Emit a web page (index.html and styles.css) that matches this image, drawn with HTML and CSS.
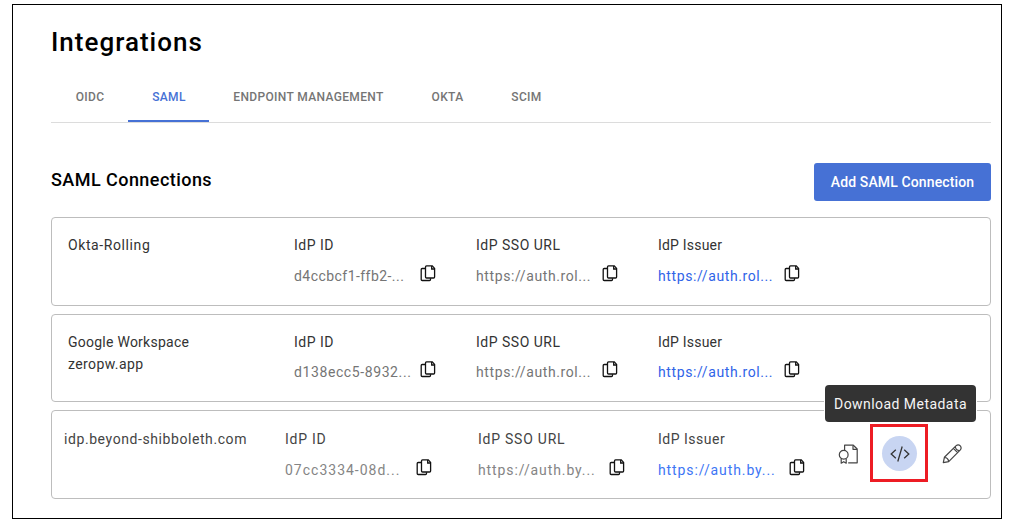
FILE: index.html
```html
<!DOCTYPE html>
<html lang="en">
<head>
<meta charset="utf-8">
<title>Integrations</title>
<link rel="stylesheet" href="styles.css">
</head>
<body>
<svg class="symbols" aria-hidden="true">
  <symbol id="copy" viewBox="0 0 16 17">
    <path class="copy-back" d="M5 3.5H2.2Q1.2 3.5 1.2 4.5V14.5Q1.2 15.5 2.2 15.5H9.5Q10.5 15.5 10.5 14.5V13.2"/>
    <path d="M6.5.9H12.3L14.6 3.4V12Q14.6 13 13.6 13H6.5Q5.5 13 5.5 12V1.9Q5.5.9 6.5.9Z"/>
    <path d="M11.7 1V4H14.6"/>
  </symbol>
</svg>
<main class="frame">
  <h1 class="title">Integrations</h1>
  <nav class="tabs">
    <a class="tab tab-oidc"><span>OIDC</span></a>
    <a class="tab tab-saml active"><span>SAML</span></a>
    <a class="tab tab-endpoint"><span>ENDPOINT MANAGEMENT</span></a>
    <a class="tab tab-okta"><span>OKTA</span></a>
    <a class="tab tab-scim"><span>SCIM</span></a>
  </nav>
  <header class="section-head">
    <h2 class="section-title">SAML Connections</h2>
    <button class="add">Add SAML Connection</button>
  </header>
  <section class="cards">
    <article class="card">
      <div class="name"><span class="n-okta">Okta-Rolling</span></div>
      <div class="field"><div class="label l-id">IdP ID</div><div class="value"><span class="v-okta">d4ccbcf1-ffb2-...</span><svg class="copy"><use href="#copy"/></svg></div></div>
      <div class="field"><div class="label l-sso">IdP SSO URL</div><div class="value"><span class="v-url">https://auth.rol...</span><svg class="copy"><use href="#copy"/></svg></div></div>
      <div class="field"><div class="label l-issuer">IdP Issuer</div><div class="value link"><span class="v-url">https://auth.rol...</span><svg class="copy"><use href="#copy"/></svg></div></div>
    </article>
    <article class="card card-google">
      <div class="name"><span class="n-google">Google Workspace</span><br><span class="n-zero">zeropw.app</span></div>
      <div class="field"><div class="label l-id">IdP ID</div><div class="value"><span class="v-google">d138ecc5-8932...</span><svg class="copy"><use href="#copy"/></svg></div></div>
      <div class="field"><div class="label l-sso">IdP SSO URL</div><div class="value"><span class="v-url">https://auth.rol...</span><svg class="copy"><use href="#copy"/></svg></div></div>
      <div class="field"><div class="label l-issuer">IdP Issuer</div><div class="value link"><span class="v-url">https://auth.rol...</span><svg class="copy"><use href="#copy"/></svg></div></div>
    </article>
    <article class="card card-idp">
      <div class="name"><span class="n-idp">idp.beyond-shibboleth.com</span></div>
      <div class="field"><div class="label l-id">IdP ID</div><div class="value"><span class="v-idp">07cc3334-08d...</span><svg class="copy"><use href="#copy"/></svg></div></div>
      <div class="field"><div class="label l-sso">IdP SSO URL</div><div class="value"><span class="v-by">https://auth.by...</span><svg class="copy"><use href="#copy"/></svg></div></div>
      <div class="field"><div class="label l-issuer">IdP Issuer</div><div class="value link"><span class="v-by">https://auth.by...</span><svg class="copy"><use href="#copy"/></svg></div></div>
      <div class="actions">
        <svg class="action" viewBox="0 0 20 20"><path d="M6.6 6.3V1.2H15.3L19.2 5V18.8H10.2"/><path d="M15 1.4V5.3H19"/><circle cx="5.7" cy="10.8" r="4.4"/><path d="M3.2 14.6V19.2L5.7 17.7L8.2 19.2V14.6"/></svg>
        <div class="highlight"><div class="circle"><svg class="code" viewBox="0 0 20 18"><path d="M5.8 4.8L1.2 9L5.8 13.2M14.2 4.8L18.8 9L14.2 13.2M12.2 1.5L7.8 16.5"/></svg></div></div>
        <svg class="action" viewBox="0 0 20 20"><path d="M1.3 18.7L2.4 13.3L13.9 1.9Q16.2-.1 18.3 1.9Q20 4 18.1 6.2L6.7 17.6ZM2.4 13.3Q6.2 13.6 6.7 17.6M11.4 4.4L15.6 8.6M13.3 2.5Q13.6 6.2 17.5 6.7"/></svg>
        <div class="tooltip">Download Metadata</div>
      </div>
    </article>
  </section>
</main>
</body>
</html>
```

FILE: styles.css
```css
* { box-sizing: border-box; }
body {
  margin: 0;
  padding: 4px 8px 0 12px;
  background: #fff;
  font-family: Roboto, "Liberation Sans", sans-serif;
  font-size: 14px;
  color: #333;
  white-space: nowrap;
}
.symbols { display: none; }
.frame {
  height: 515px;
  border: 1px solid #000;
  padding: 19px 10px 0 38px;
}
.title {
  margin: 0;
  height: 36px;
  font-size: 26px;
  line-height: 36px;
  font-weight: 500;
  letter-spacing: 1px;
  color: #000;
}
.tabs {
  display: flex;
  height: 63px;
  border-bottom: 1px solid #dcdcdc;
  font-size: 12px;
  font-weight: 500;
  letter-spacing: .35px;
  color: #757575;
}
.tab {
  height: 62px;
  padding: 25px 0 0 1px;
  line-height: 24px;
  text-align: center;
}
.tab-oidc { width: 77px; }
.tab-saml { width: 81px; }
.tab-endpoint { width: 198px; }
.tab-okta { width: 80px; }
.tab-scim { width: 78px; }
.tab.active { color: #4671d5; border-bottom: 2px solid #4671d5; }
.section-head {
  display: flex;
  justify-content: space-between;
  align-items: center;
  height: 38px;
  margin: 40px 0 16px;
}
.section-title {
  margin: -4px 0 0;
  font-size: 18px;
  line-height: 24px;
  font-weight: 500;
  letter-spacing: .45px;
  color: #000;
}
.add {
  width: 177px;
  height: 38px;
  padding: 0;
  border: 0;
  border-radius: 3px;
  background: #4671d5;
  color: #fff;
  font: 500 14px Roboto, sans-serif;
  letter-spacing: .13px;
}
.cards { display: flex; flex-direction: column; gap: 8px; }
.card {
  display: grid;
  grid-template-columns: 226px 182px 182px 182px;
  height: 89px;
  padding: 16px 0 0 16px;
  border: 1px solid #bdbdbd;
  border-radius: 4px;
}
.card-google { height: 88px; }
.card-idp {
  grid-template-columns: 221px 193px 180px 180px 1fr;
  padding: 17px 0 0 12px;
  color: #444;
}
.name, .label { line-height: 22px; letter-spacing: .5px; }
.n-okta { letter-spacing: .6px; }
.n-google { letter-spacing: .25px; }
.n-zero { letter-spacing: .4px; }
.n-idp { letter-spacing: .58px; }
.l-issuer { letter-spacing: .2px; }
.card-idp .label { letter-spacing: .76px; }
.card-idp .l-issuer { letter-spacing: .5px; }
.value {
  display: flex;
  justify-content: space-between;
  width: 142px;
  margin-top: 9px;
  line-height: 22px;
  letter-spacing: .6px;
  color: #757575;
}
.card-google .value { margin-top: 8px; }
.card-idp .value { width: 147px; color: #858585; }
.link { color: #3064e8; }
.value.link { color: #3064e8; }
.card-idp .value.link { color: #3d76f5; }
.v-okta { letter-spacing: .45px; }
.v-idp { letter-spacing: 1px; }
.v-by { letter-spacing: .9px; }
.copy {
  width: 16px;
  height: 17px;
  fill: none;
  stroke: #111;
  stroke-width: 1.3;
}
.actions {
  position: relative;
  display: flex;
  align-items: center;
  height: 58px;
  margin-top: -4px;
}
.action {
  flex: none;
  width: 20px;
  height: 20px;
  margin-top: 1px;
  fill: none;
  stroke: #444;
  stroke-width: 1.2;
  stroke-linejoin: round;
}
.highlight {
  flex: none;
  display: grid;
  place-items: center;
  width: 58px;
  height: 58px;
  margin: 0 14px 0 12px;
  padding: 1px 0 0 1px;
  border: 3px solid #ed1c24;
}
.circle { display: grid; place-items: center; width: 35px; height: 35px; border-radius: 50%; background: #c8d5f2; }
.code { width: 20px; height: 18px; fill: none; stroke: #333; stroke-width: 1.3; }
.tooltip {
  position: absolute;
  left: -13px;
  top: -39px;
  width: 151px;
  height: 37px;
  border-radius: 4px;
  background: #333;
  box-shadow: 0 0 0 1px #fff;
  color: #f5f5f5;
  line-height: 38px;
  text-align: center;
  letter-spacing: .45px;
}
```
